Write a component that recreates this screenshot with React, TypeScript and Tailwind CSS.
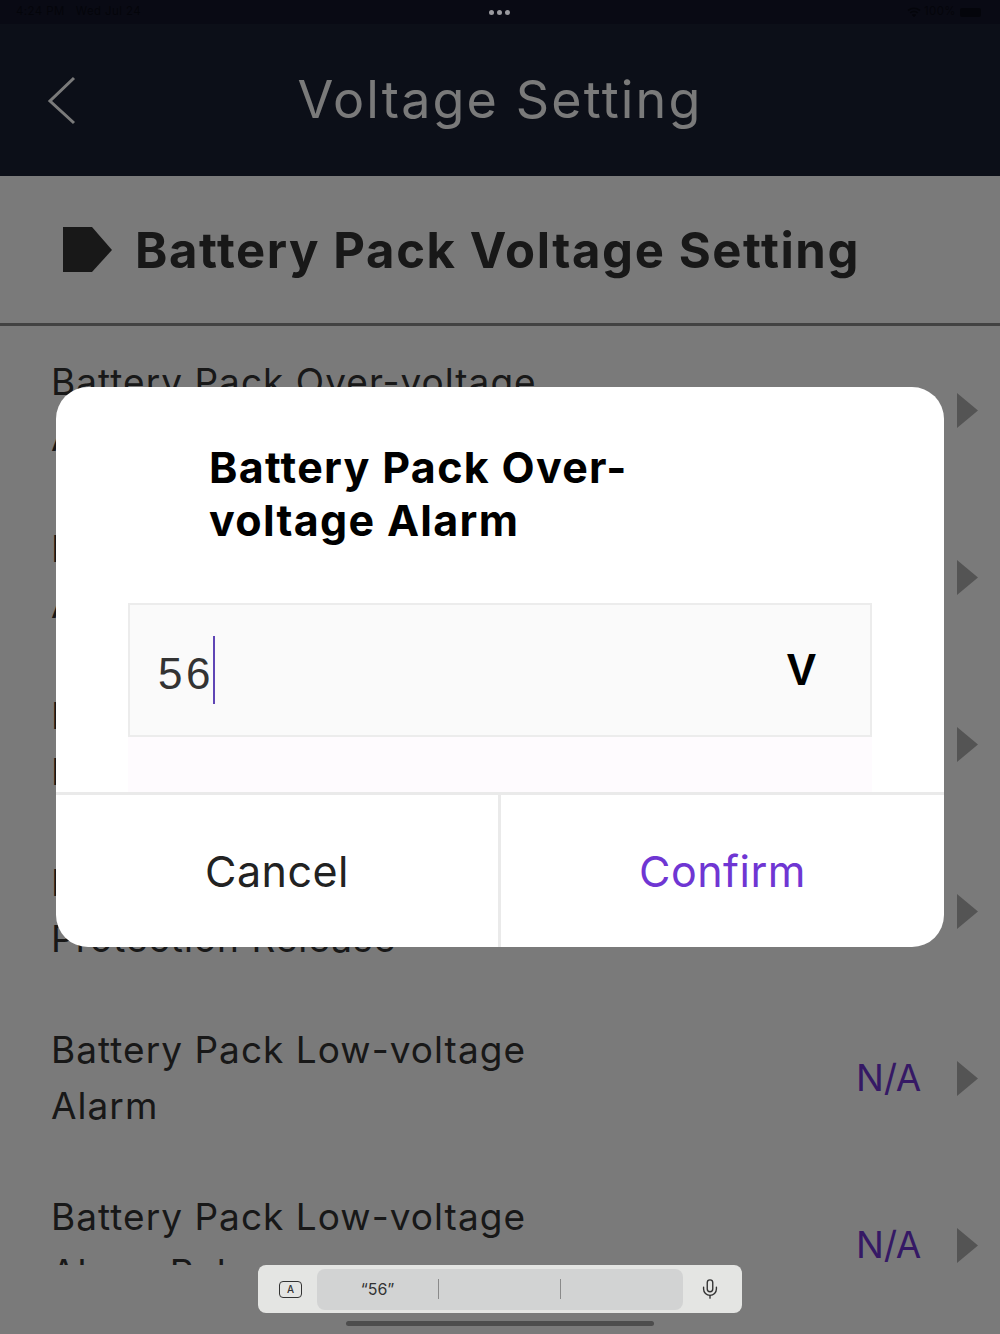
import React from "react";
import { Mic } from "lucide-react";

const FONT = "font-['Inter','Noto_Sans',sans-serif]";

const rows: [string, string][] = [
  ["Battery Pack Over-voltage", "Alarm"],
  ["Battery Pack Over-voltage", "Alarm Release"],
  ["Battery Pack Over-voltage", "Protection"],
  ["Battery Pack Over-voltage", "Protection Release"],
  ["Battery Pack Low-voltage", "Alarm"],
  ["Battery Pack Low-voltage", "Alarm Release"],
];

function Row({ lines }: { lines: [string, string] }) {
  return (
    <div className="flex h-[167px] shrink-0 items-center pl-[51px] pr-[22px]">
      <div className="flex-1 text-[37px] leading-[56px] tracking-[1.03px] text-[#333333]">
        <div>{lines[0]}</div>
        <div>{lines[1]}</div>
      </div>
      <span className="mr-[36px] text-[37px] leading-[56px] tracking-[-0.3px] text-[#6f36d3]">N/A</span>
      <svg width="21" height="35" viewBox="0 0 21 35" className="mt-[2px] text-[#b0b0b0]">
        <path d="M0 0 L21 17.5 L0 35 Z" fill="currentColor" />
      </svg>
    </div>
  );
}

export default function App() {
  return (
    <div className={`relative h-[1334px] w-[1000px] overflow-hidden bg-white ${FONT}`}>
      {/* Page */}
      <div className="flex h-[24px] items-center justify-between bg-[#14162a] pl-[16px] pr-[19px] text-[11.5px] tracking-[0.4px] text-[#0a0b18]">
        <div className="flex gap-[11px]">
          <span>4:24 PM</span>
          <span>Wed Jul 24</span>
        </div>
        <div className="flex items-center gap-[3px]">
          <svg width="14" height="11" viewBox="0 0 14 11" fill="none" stroke="#0a0b18">
            <path d="M1 3.5 Q7 -1 13 3.5" strokeWidth="1.6" />
            <path d="M3.2 5.8 Q7 3 10.8 5.8" strokeWidth="1.6" />
            <path d="M7 10 L5 7.8 Q7 6.6 9 7.8 Z" fill="#0a0b18" strokeWidth="0.5" />
          </svg>
          <span>100%</span>
          <span className="ml-[1px] h-[9px] w-[21px] rounded-[2px] bg-[#0a0b18]" />
        </div>
      </div>

      <div className="relative flex h-[152px] items-center justify-center bg-[#1b2134] text-[52px] tracking-[2.15px] text-white">
        <svg width="30" height="50" viewBox="0 0 30 50" fill="none" stroke="white" strokeWidth="3" className="absolute left-[47px] top-[52px]">
          <path d="M27 2 L3 25 L27 47" />
        </svg>
        <span>Voltage Setting</span>
      </div>

      <div className="flex h-[150px] items-center border-b-[3px] border-[#8a8a8a] pl-[63px]">
        <svg width="50" height="46" viewBox="0 0 50 46">
          <path d="M0 0 H29 L49 23 L29 45 H0 Z" fill="#333333" />
        </svg>
        <span className="ml-[22px] pt-[3px] text-[49px] font-bold tracking-[1.6px] text-[#333333]">Battery Pack Voltage Setting</span>
      </div>

      <div className="flex h-[939px] flex-col overflow-hidden">
        {rows.map((r, i) => (
          <Row key={i} lines={r} />
        ))}
      </div>

      {/* Dim */}
      <div className="absolute inset-0 bg-black/[0.52]" />

      <div className="absolute left-[489px] top-[10px] flex gap-[3px]">
        <span className="h-[5px] w-[5px] rounded-full bg-[#9a9a9f]" />
        <span className="h-[5px] w-[5px] rounded-full bg-[#9a9a9f]" />
        <span className="h-[5px] w-[5px] rounded-full bg-[#9a9a9f]" />
      </div>

      {/* Dialog */}
      <div className="absolute left-[56px] top-[387px] flex h-[560px] w-[888px] flex-col overflow-hidden rounded-[32px] bg-white">
        <div className="h-[216px] pl-[153px] pt-[54px] text-[43px] font-bold leading-[53px] tracking-[1.3px] text-black">
          <div>Battery Pack Over-</div>
          <div>voltage Alarm</div>
        </div>
        <div className="mx-[72px] flex h-[134px] items-center border-2 border-[#ececec] bg-[#fafafa] pl-[28px] pr-[54px]">
          <span className="pt-[8px] font-['Liberation_Sans',sans-serif] text-[44px] tracking-[3.5px] text-[#333333]">56</span>
          <span className="ml-[-1px] h-[68px] w-[2px] bg-[#5f45b5]" />
          <span className="ml-auto font-['Liberation_Sans',sans-serif] text-[44px] font-bold text-black">V</span>
        </div>
        <div className="mx-[72px] h-[55px] bg-[#fefbfe]" />
        <div className="flex flex-1 border-t-[3px] border-[#eaeaea] text-[43px] tracking-[0.5px]">
          <div className="flex w-[445px] items-center justify-center border-r-[3px] border-[#eaeaea] text-[#222222]">Cancel</div>
          <div className="flex flex-1 items-center justify-center text-[#6f36d3]">Confirm</div>
        </div>
      </div>

      {/* Keyboard accessory bar */}
      <div className="absolute left-[258px] top-[1265px] flex h-[48px] w-[484px] items-center rounded-[8px] bg-[#e4e5e3] text-[#333333]">
        <div className="flex w-[59px] justify-center pl-[6px]">
          <div className="flex h-[17px] w-[23px] items-center justify-center rounded-[4px] border-[1.5px] border-[#333333] text-[10px] font-medium">A</div>
        </div>
        <div className="flex h-[41px] w-[366px] items-center rounded-[8px] bg-[#d2d3d3] text-[16px]">
          <div className="flex h-[20px] w-[122px] items-center justify-center border-r border-[#8a8a8a]">“56”</div>
          <div className="h-[20px] w-[122px] border-r border-[#8a8a8a]" />
        </div>
        <div className="flex flex-1 justify-center pr-[6px]">
          <Mic size={22} strokeWidth={1.5} />
        </div>
      </div>
      <div className="absolute left-[346px] top-[1321px] h-[5px] w-[308px] rounded-full bg-[#4d4d4d]" />
    </div>
  );
}
